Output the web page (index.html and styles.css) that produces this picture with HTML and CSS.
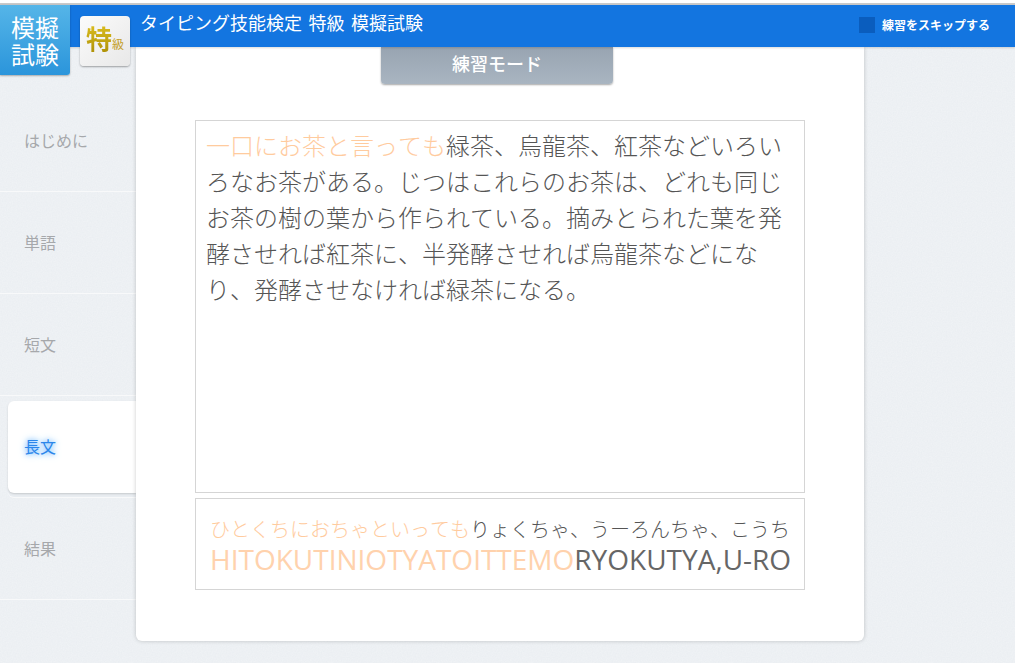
FILE: index.html
```html
<!DOCTYPE html>
<html lang="ja">
<head>
    <meta charset="UTF-8">
    <meta name="viewport" content="width=device-width, initial-scale=1.0">
    <title>タイピング技能検定 特級 模擬試験</title>
    <link rel="stylesheet" href="styles.css">
</head>
<body>
    <div class="top-line"></div>
    <div class="top-bar">
        <div class="title">タイピング技能検定 特級 模擬試験</div>
        <div class="skip">
            <span class="skip-box"></span>
            <span class="skip-label">練習をスキップする</span>
        </div>
    </div>

    <div class="exam-badge">模擬<br>試験</div>
    <div class="grade-badge"><span class="grade-big">特</span><span class="grade-small">級</span></div>

    <div class="layout">
        <div class="sidebar">
            <div class="tab">はじめに</div>
            <div class="tab">単語</div>
            <div class="tab">短文</div>
            <div class="tab tab-active"><span>長文</span></div>
            <div class="tab">結果</div>
        </div>

        <div class="card">
            <div class="mode-btn">練習モード</div>
            <div class="text-box"><span class="done">一口にお茶と言っても</span>緑茶、烏龍茶、紅茶などいろいろなお茶がある。じつはこれらのお茶は、どれも同じお茶の樹の葉から作られている。摘みとられた葉を発酵させれば紅茶に、半発酵させれば烏龍茶などになり、発酵させなければ緑茶になる。</div>
            <div class="input-box">
                <div class="kana"><span class="done">ひとくちにおちゃといっても</span>りょくちゃ、うーろんちゃ、こうち</div>
                <div class="roma"><span class="done">HITOKUTINIOTYATOITTEMO</span>RYOKUTYA,U-RO</div>
            </div>
        </div>
    </div>
</body>
</html>
```

FILE: styles.css
```css
* {
    margin: 0;
    padding: 0;
    box-sizing: border-box;
    font-family: "Noto Sans CJK JP", "Open Sans", sans-serif;
    font-kerning: none;
}

html, body {
    height: 100%;
    overflow: hidden;
}

body {
    background-color: #e9edf1;
    background-image: url("data:image/svg+xml,%3Csvg xmlns='http://www.w3.org/2000/svg' width='200' height='200'%3E%3Cfilter id='n'%3E%3CfeTurbulence type='fractalNoise' baseFrequency='0.8' numOctaves='2'/%3E%3CfeColorMatrix values='0 0 0 0 1 0 0 0 0 1 0 0 0 0 1 0 0 0 0.35 0'/%3E%3C/filter%3E%3Crect width='200' height='200' filter='url(%23n)'/%3E%3C/svg%3E");
}

.top-line {
    height: 5px;
    background: #fff;
    border-bottom: 2px solid #c9c9c9;
}

.top-bar {
    display: flex;
    justify-content: space-between;
    height: 42px;
    padding: 5px 25px 0 140px;
    background-color: #1375e0;
    color: #fff;
    box-shadow: 0 1px 2px rgba(0,0,0,0.15);
    position: relative;
    z-index: 2;
}

.title {
    font-size: 18px;
    line-height: 24px;
    word-spacing: 2.5px;
}

.skip {
    display: flex;
    align-items: center;
    gap: 7px;
    height: 24px;
    margin-top: 3px;
}

.skip-box {
    width: 16px;
    height: 16px;
    background: #0a5dbe;
}

.skip-label {
    margin-top: -2px;
    font-size: 12px;
    font-weight: 700;
}

.exam-badge {
    position: absolute;
    top: 5px;
    left: 0;
    z-index: 3;
    width: 70px;
    height: 70px;
    padding-top: 8px;
    background: linear-gradient(#55b5e8, #2b95db);
    border-radius: 0 0 3px 0;
    box-shadow: 0 1px 2px rgba(0,0,0,0.3);
    color: #fff;
    font-size: 24px;
    line-height: 27px;
    text-align: center;
}

.grade-badge {
    position: absolute;
    top: 16px;
    left: 80px;
    z-index: 3;
    display: flex;
    align-items: baseline;
    justify-content: center;
    width: 50px;
    height: 50px;
    padding-top: 4px;
    background: linear-gradient(135deg, #fbfbfb, #e8e8e8);
    border-radius: 4px;
    box-shadow: 0 1px 2px rgba(0,0,0,0.35);
    line-height: 36px;
}

.grade-big {
    background: linear-gradient(#e2c422, #a98c04);
    -webkit-background-clip: text;
    background-clip: text;
    color: transparent;
    font-size: 26px;
    font-weight: 700;
}

.grade-small {
    font-size: 12px;
    color: #c4a02a;
}

.layout {
    display: flex;
}

.sidebar {
    width: 136px;
    padding-top: 43px;
}

.tab {
    display: flex;
    align-items: center;
    height: 102px;
    padding: 0 0 2px 24px;
    border-bottom: 1px solid #f8f9fa;
    color: #a6a8ab;
    font-size: 16px;
}

.tab-active {
    height: 92px;
    margin: 5px 0 5px 8px;
    padding-left: 16px;
    background: #fff;
    border: none;
    border-radius: 6px 0 0 6px;
    box-shadow: 0 1px 2px rgba(0,0,0,0.15), 0 4px 0 #e9edf1, 0 5px 0 #f8f9fa;
    color: #2b86ea;
    text-shadow: 0 0 5px #6fb8ff, 0 0 8px #9fd0ff;
}

.card {
    display: flex;
    flex-direction: column;
    align-items: center;
    width: 728px;
    height: 594px;
    background: #fff;
    border-radius: 0 0 6px 6px;
    box-shadow: 0 0 4px rgba(0,0,0,0.2);
}

.mode-btn {
    width: 232px;
    height: 37px;
    margin-right: 6px;
    padding-top: 2px;
    background: linear-gradient(#98a4b1, #a9b5c1);
    border-radius: 0 0 4px 4px;
    box-shadow: 0 1px 2px rgba(0,0,0,0.35);
    color: #fff;
    font-size: 18px;
    font-weight: 500;
    line-height: 28px;
    text-align: center;
}

.text-box {
    width: 610px;
    height: 373px;
    margin-top: 36px;
    padding: 6px 10px;
    border: 1px solid #d5d5d5;
    color: #555;
    font-size: 24px;
    font-weight: 300;
    line-height: 36px;
}

.input-box {
    width: 610px;
    height: 92px;
    margin-top: 5px;
    padding: 15px 14px 0;
    border: 1px solid #d5d5d5;
    color: #555;
    overflow: hidden;
    white-space: nowrap;
}

.kana {
    font-size: 20px;
    font-weight: 300;
    line-height: 30px;
}

.roma {
    font-family: "Open Sans", sans-serif;
    color: #666;
    font-size: 28px;
    line-height: 30px;
}

.done {
    color: #ffcb9e;
    font-family: inherit;
}

.roma .done {
    color: #ffd2ad;
}
```
